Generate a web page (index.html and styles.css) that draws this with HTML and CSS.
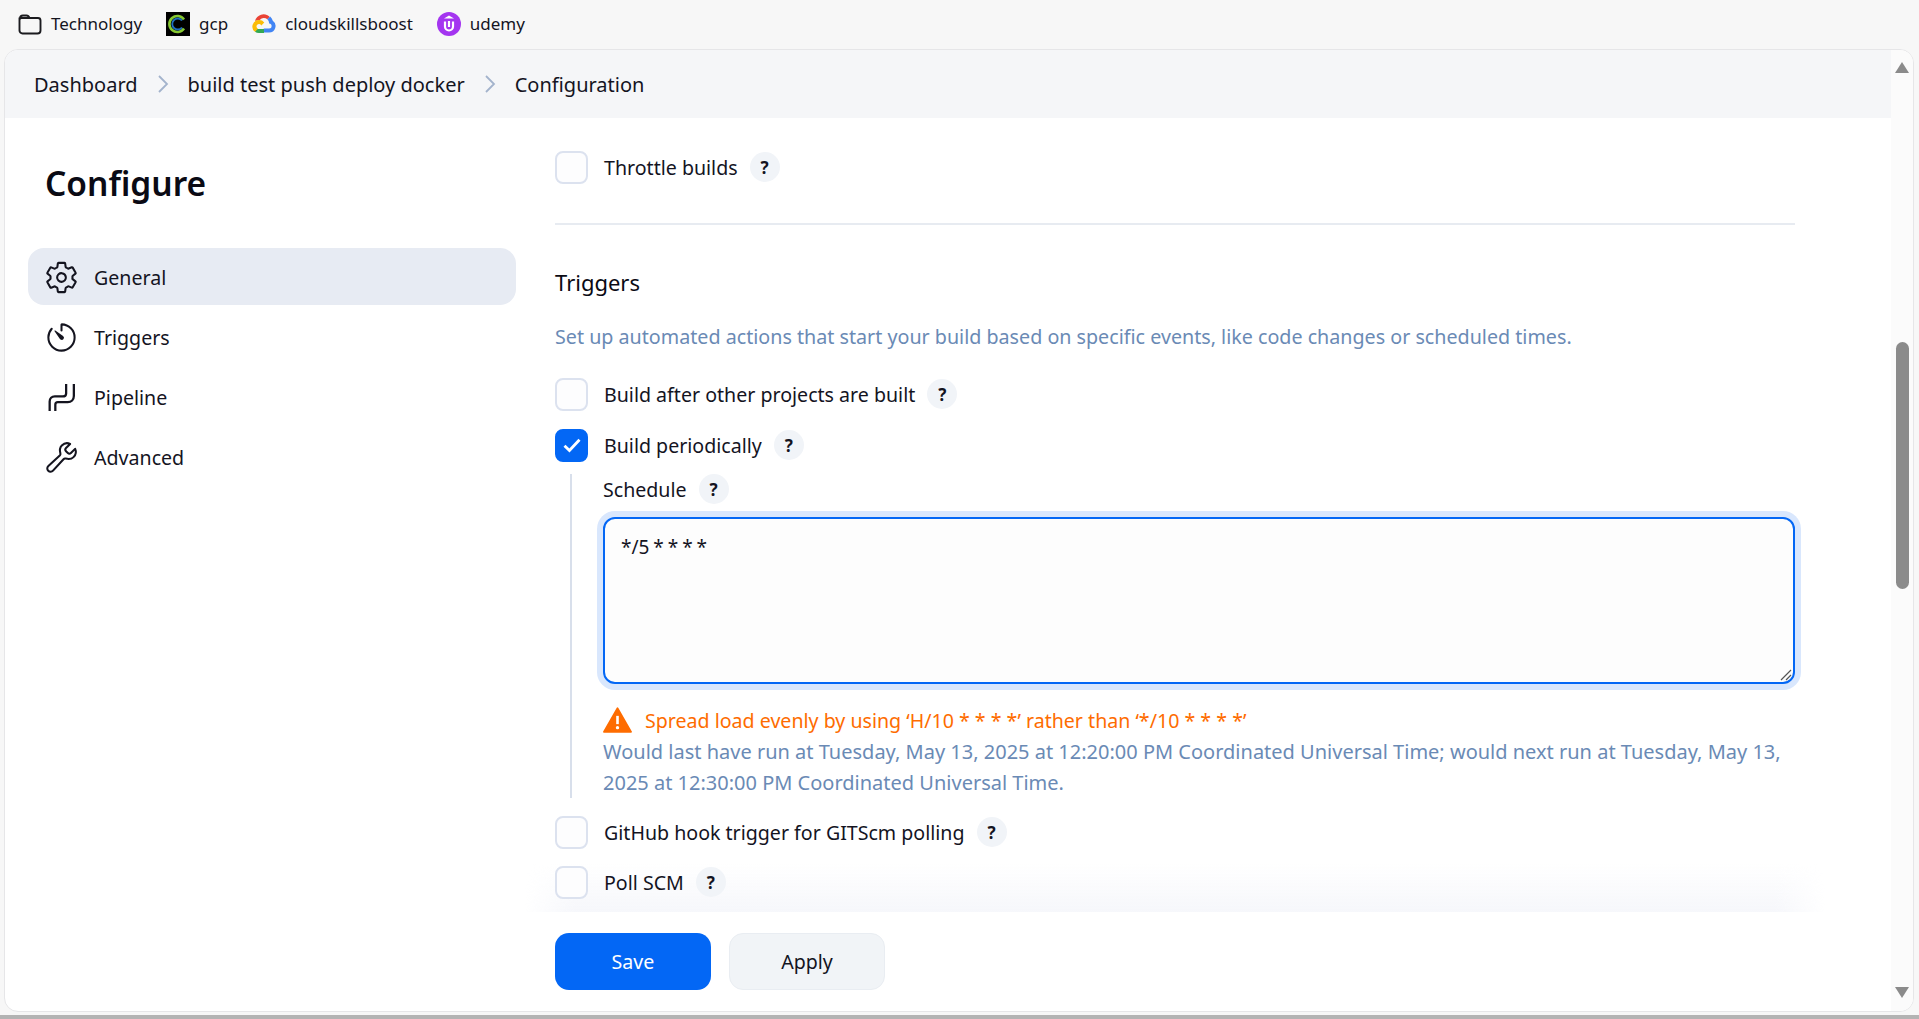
FILE: index.html
```html
<!DOCTYPE html>
<html lang="en">
<head>
    <meta charset="UTF-8">
    <title>Configuration</title>
    <link rel="stylesheet" href="styles.css">
</head>
<body>
    <div class="bookmarks">
        <a class="mark">
            <svg class="fav" viewBox="0 0 24 24"><path d="M2 6.500a3 3 0 0 1 3-3h3.500c1.600 0 2.400.9 3 2.500H20a2.500 2.500 0 0 1 2.500 2.500v10a3 3 0 0 1-3 3H4.500a3 3 0 0 1-3-3V6.500z M1.500 7.500c0-1 1-1.500 2-1.500h7.500" fill="none" stroke="#1b1b1f" stroke-width="1.900"/></svg>
            Technology
        </a>
        <a class="mark">
            <svg class="fav" viewBox="0 0 24 24"><rect width="24" height="24" fill="#000"/><path d="M18 16.500A8 8 0 1 1 18 7.500" fill="none" stroke="#86c832" stroke-width="2.600"/><path d="M16 15.500A5.500 5.500 0 1 1 16 8.500" fill="none" stroke="#1f6fc0" stroke-width="1.800"/></svg>
            gcp
        </a>
        <a class="mark">
            <svg class="fav" viewBox="0 0 24 24">
                <path d="M15.300 7.300l2-2 .1-.9A9 9 0 0 0 3 8.800l.7-.1 4-.7.3-.3a5 5 0 0 1 7.300-.4z" fill="#ea4335"/>
                <path d="M20.800 8.800a9 9 0 0 0-2.700-4.400l-2.800 2.800a5 5 0 0 1 1.800 3.900v.5a2.500 2.500 0 1 1 0 5H12l-.5.500v3l.5.500h5.100a6.500 6.500 0 0 0 3.700-11.800z" fill="#4285f4"/>
                <path d="M6.900 21.100H12v-4H6.900a2.500 2.500 0 0 1-1-.2l-.7.2-2 2-.2.7a6.500 6.500 0 0 0 3.900 1.300z" fill="#34a853"/>
                <path d="M6.900 8.100A6.500 6.500 0 0 0 3 19.800l3-3a2.500 2.500 0 1 1 3.300-3.300l3-3a6.500 6.500 0 0 0-5.400-2.400z" fill="#fbbc05"/>
            </svg>
            cloudskillsboost
        </a>
        <a class="mark">
            <svg class="fav" viewBox="0 0 24 24"><circle cx="12" cy="12" r="12" fill="#a435f0"/><path d="M12 3.500l5 3H7z" fill="#fff"/><path d="M8 9.500v5a4 4 0 0 0 8 0v-5" fill="none" stroke="#fff" stroke-width="2.200"/><path d="M12 9v6" stroke="#fff" stroke-width="2.200"/></svg>
            udemy
        </a>
    </div>

    <div class="frame">
        <div class="page">
            <div class="crumbs">
                <span>Dashboard</span>
                <svg class="chev" viewBox="0 0 12 20"><path d="M2 2l8 8-8 8" fill="none" stroke="#a3b3cc" stroke-width="1.800"/></svg>
                <span>build test push deploy docker</span>
                <svg class="chev" viewBox="0 0 12 20"><path d="M2 2l8 8-8 8" fill="none" stroke="#a3b3cc" stroke-width="1.800"/></svg>
                <span>Configuration</span>
            </div>
            <div class="content">
                <div class="sidebar">
                    <h1>Configure</h1>
                    <div class="nav-item active">
                        <svg class="nav-icon" viewBox="0 0 512 512"><path d="M262.290 192.310a64 64 0 1 0 57.400 57.400 64.130 64.130 0 0 0-57.400-57.400zM416.390 256a154.340 154.340 0 0 1-1.530 20.790l45.210 35.460a10.810 10.810 0 0 1 2.450 13.750l-42.770 74a10.810 10.810 0 0 1-13.140 4.590l-44.900-18.080a16.110 16.110 0 0 0-15.170 1.750A164.480 164.480 0 0 1 325 400.800a15.940 15.940 0 0 0-8.820 12.140l-6.730 47.890a11.080 11.080 0 0 1-10.680 9.170h-85.540a11.110 11.110 0 0 1-10.690-8.870l-6.720-47.820a16.070 16.070 0 0 0-9-12.220 155.300 155.300 0 0 1-21.460-12.570 16 16 0 0 0-15.110-1.710l-44.890 18.070a10.810 10.810 0 0 1-13.140-4.580l-42.770-74a10.800 10.800 0 0 1 2.450-13.750l38.210-30a16.050 16.050 0 0 0 6-14.080c-.36-4.170-.58-8.330-.58-12.500s.21-8.270.58-12.350a16 16 0 0 0-6.070-13.940l-38.190-30A10.810 10.810 0 0 1 49.480 186l42.770-74a10.810 10.810 0 0 1 13.140-4.590l44.900 18.080a16.110 16.110 0 0 0 15.170-1.750A164.480 164.480 0 0 1 187 111.200a15.940 15.940 0 0 0 8.820-12.140l6.730-47.890A11.080 11.080 0 0 1 213.230 42h85.540a11.110 11.110 0 0 1 10.690 8.870l6.720 47.820a16.070 16.070 0 0 0 9 12.220 155.300 155.300 0 0 1 21.460 12.570 16 16 0 0 0 15.110 1.710l44.890-18.070a10.810 10.810 0 0 1 13.140 4.580l42.770 74a10.800 10.800 0 0 1-2.450 13.750l-38.210 30a16.050 16.050 0 0 0-6.050 14.080c.33 4.140.55 8.300.55 12.470z"/></svg>
                        General
                    </div>
                    <div class="nav-item">
                        <svg class="nav-icon" viewBox="0 0 512 512"><path d="M112.910 128A191.850 191.850 0 0 0 64 254c-1.180 106.350 85.650 193.800 192 194 106.200.2 192-85.830 192-192 0-104.540-83.550-189.610-187.580-192a4.360 4.360 0 0 0-4.420 4.370V152"/><path class="solid" d="M233.380 278.630l-79-113a8.130 8.130 0 0 1 11.320-11.320l113 79a32.500 32.500 0 0 1-37 53.340 33.210 33.210 0 0 1-9.320-8.020z"/></svg>
                        Triggers
                    </div>
                    <div class="nav-item">
                        <svg class="nav-icon" viewBox="-3 -3 34 34"><path class="thin" d="M2.500 27v-9c0-3 2-5 5-5h7.500c2.500 0 3.500-1.500 3.500-3V1"/><path class="thin" d="M8 27v-6c0-1.500 1-2.500 2.500-2.500H20c3.500 0 6-2.500 6-6V1"/></svg>
                        Pipeline
                    </div>
                    <div class="nav-item">
                        <svg class="nav-icon" viewBox="0 0 512 512"><path d="M393.870 190a32.100 32.100 0 0 1-45.250 0l-26.570-26.570a32.090 32.090 0 0 1 0-45.260L382.190 58a1 1 0 0 0-.3-1.640c-38.820-16.640-89.150-8.160-121.110 23.570-30.580 30.350-32.320 76-21.120 115.840a31.930 31.930 0 0 1-9.060 32.080L64 380a48.170 48.170 0 1 0 68 68l153.240-167a31.930 31.930 0 0 1 31.530-9.270c39.630 10.500 84.850 8.820 115.120-21.120 32.560-32.060 40.080-84.830 24.170-120.700a1 1 0 0 0-1.640-.3z"/></svg>
                        Advanced
                    </div>
                </div>

                <div class="main">
                    <div class="check-row first">
                        <span class="box"></span>
                        <span>Throttle builds</span>
                        <span class="help">?</span>
                    </div>
                    <hr class="rule">
                    <h2>Triggers</h2>
                    <p class="desc">Set up automated actions that start your build based on specific events, like code changes or scheduled times.</p>
                    <div class="check-row">
                        <span class="box"></span>
                        <span>Build after other projects are built</span>
                        <span class="help">?</span>
                    </div>
                    <div class="check-row">
                        <span class="box on">
                            <svg viewBox="0 0 16 16"><path d="M3 8.500l3.300 3.200L13 4.500" fill="none" stroke="#fff" stroke-width="1.900"/></svg>
                        </span>
                        <span>Build periodically</span>
                        <span class="help">?</span>
                    </div>
                    <div class="nested">
                        <div class="field-label">
                            <span>Schedule</span>
                            <span class="help">?</span>
                        </div>
                        <div class="cron">*/5 * * * *
                            <svg class="grip" viewBox="0 0 12 12"><path d="M1 11L11 1M6 11l5-5" stroke="#555" stroke-width="1.200"/></svg>
                        </div>
                        <div class="warn">
                            <svg viewBox="0 0 24 22"><path d="M12 1L23.500 21H.5z" fill="#fe6c00" stroke="#fe6c00" stroke-width="1.500" stroke-linejoin="round"/><path d="M12 7.500v7" stroke="#fff" stroke-width="2.200"/><circle cx="12" cy="17.500" r="1.400" fill="#fff"/></svg>
                            Spread load evenly by using ‘H/10 * * * *’ rather than ‘*/10 * * * *’
                        </div>
                        <p class="next-run">Would last have run at Tuesday, May 13, 2025 at 12:20:00 PM Coordinated Universal Time; would next run at Tuesday, May 13, 2025 at 12:30:00 PM Coordinated Universal Time.</p>
                    </div>
                    <div class="check-row">
                        <span class="box"></span>
                        <span>GitHub hook trigger for GITScm polling</span>
                        <span class="help">?</span>
                    </div>
                    <div class="check-row last">
                        <span class="box"></span>
                        <span>Poll SCM</span>
                        <span class="help">?</span>
                    </div>
                    <div class="bottom-bar">
                        <button class="btn save">Save</button>
                        <button class="btn apply">Apply</button>
                    </div>
                </div>
            </div>
        </div>
        <div class="scrollbar">
            <span class="arrow up"></span>
            <span class="thumb"></span>
            <span class="arrow down"></span>
        </div>
    </div>
</body>
</html>
```

FILE: styles.css
```css
* {
    box-sizing: border-box;
}
html, body {
    margin: 0;
    height: 100%;
}
body {
    display: flex;
    flex-direction: column;
    overflow: hidden;
    background-color: #f7f7f7;
    border-bottom: 4px solid #b3b3b3;
    font-family: "Noto Sans", "Open Sans", sans-serif;
    font-size: 19.600px;
    color: #14141f;
}

/* bookmarks bar */
.bookmarks {
    display: flex;
    align-items: center;
    gap: 24px;
    height: 49px;
    flex: none;
    padding: 0 0 2px 18px;
    font-size: 17px;
}
.mark {
    display: flex;
    align-items: center;
    gap: 9px;
}
.fav {
    width: 24px;
    height: 24px;
}

/* window */
.frame {
    flex: 1;
    display: flex;
    margin: 0 5px 3px 4px;
    min-height: 0;
    background: #fff;
    border: 1px solid #e6e6e8;
    border-radius: 14px;
    overflow: hidden;
}
.page {
    flex: 1;
    display: flex;
    flex-direction: column;
    min-width: 0;
}
.crumbs {
    flex: none;
    display: flex;
    align-items: center;
    gap: 19px;
    height: 68px;
    padding-left: 29px;
    background: #f5f6f8;
    font-size: 20px;
}
.chev {
    width: 12px;
    height: 20px;
}
.content {
    flex: 1;
    display: flex;
    min-height: 0;
}

/* sidebar */
.sidebar {
    flex: none;
    width: 550px;
    padding: 38px 34px 0 23px;
}
.sidebar h1 {
    margin: 0 0 38px 17px;
    font-size: 33.500px;
    line-height: 54px;
    font-weight: 600;
    color: #0a0a14;
}
.nav-item {
    display: flex;
    align-items: center;
    gap: 15px;
    height: 57px;
    margin-bottom: 3px;
    margin-right: 5px;
    padding: 2px 0 0 16px;
    border-radius: 16px;
}
.nav-item.active {
    background: #e7ebf3;
}
.nav-icon {
    width: 35px;
    height: 35px;
    fill: none;
    stroke: #14141f;
    stroke-width: 30;
    stroke-linecap: round;
    stroke-linejoin: round;
}
.nav-icon .solid {
    fill: #14141f;
    stroke: none;
}
.nav-icon .thin {
    stroke-width: 2.200;
    stroke-linecap: butt;
}

/* main column */
.main {
    flex: 1;
    display: flex;
    flex-direction: column;
    min-width: 0;
    padding-right: 96px;
}
.check-row {
    position: relative;
    z-index: 1;
    flex: none;
    display: flex;
    align-items: center;
    gap: 16px;
    height: 34px;
    margin-bottom: 17px;
}
.check-row.first {
    margin-top: 32px;
    margin-bottom: 0;
}
.check-row.last {
    margin-top: -1px;
    margin-bottom: 0;
}
.box {
    flex: none;
    display: flex;
    align-items: center;
    justify-content: center;
    width: 33px;
    height: 33px;
    background: #fdfdfe;
    border: 2.500px solid #dce2ef;
    border-radius: 8px;
}
.box.on {
    background: #0367f5;
    border-color: #0367f5;
}
.box svg {
    flex: none;
    width: 24px;
    height: 24px;
}
.help {
    flex: none;
    display: flex;
    align-items: center;
    justify-content: center;
    width: 30px;
    height: 30px;
    margin-left: -4px;
    border-radius: 50%;
    background: #f1f4f8;
    font-size: 17px;
    font-weight: 700;
}
.rule {
    flex: none;
    width: 100%;
    height: 2px;
    margin: 39px 0 0;
    border: 0;
    background: #e7ebf1;
}
h2 {
    flex: none;
    margin: 42px 0 0;
    font-size: 22px;
    line-height: 30px;
    font-weight: 400;
    color: #0a0a14;
}
.desc {
    flex: none;
    margin: 25px 0 25px;
    font-size: 19.700px;
    line-height: 30px;
    color: #6a8ab5;
}

/* nested schedule block */
.nested {
    flex: none;
    margin: -5px 0 17px 15px;
    padding-left: 31px;
    border-left: 2px solid #d8dfeb;
}
.field-label {
    display: flex;
    align-items: center;
    gap: 16px;
    height: 30px;
}
.cron {
    position: relative;
    height: 167px;
    margin-top: 13px;
    padding: 15px 16px;
    background: #fdfdfd;
    border: 2px solid #0367f5;
    border-radius: 12px;
    box-shadow: 0 0 0 6px #d9e7fd;
    font-size: 19px;
    word-spacing: -1px;
}
.grip {
    position: absolute;
    right: 1px;
    bottom: 1px;
    width: 12px;
    height: 12px;
}
.warn {
    display: flex;
    align-items: center;
    gap: 13px;
    height: 30px;
    margin-top: 21px;
    color: #fe6c00;
}
.warn svg {
    flex: none;
    width: 29px;
    height: 26px;
}
.next-run {
    margin: 0;
    padding-top: 1px;
    font-size: 20px;
    line-height: 31px;
    color: #6a8ab5;
}

/* save / apply */
.bottom-bar {
    position: relative;
    flex: none;
    display: flex;
    gap: 18px;
    margin-top: auto;
    padding: 21px 0 21px;
    background: #fff;
}
.bottom-bar::before {
    content: "";
    position: absolute;
    left: -30px;
    right: -30px;
    bottom: 100%;
    height: 48px;
    background: linear-gradient(to bottom, rgba(245, 246, 250, 0), #f6f7fb);
    -webkit-mask-image: linear-gradient(to right, transparent, #000 50px, #000 calc(100% - 50px), transparent);
    mask-image: linear-gradient(to right, transparent, #000 50px, #000 calc(100% - 50px), transparent);
    pointer-events: none;
}
.btn {
    width: 156px;
    height: 57px;
    border-radius: 14px;
    font: inherit;
}
.save {
    border: 0;
    background: #0367f5;
    color: #fff;
}
.apply {
    border: 1px solid #e9edf2;
    background: #f1f4f7;
    color: #14141f;
}

/* scrollbar */
.scrollbar {
    flex: none;
    display: flex;
    flex-direction: column;
    align-items: center;
    width: 22px;
    padding: 12px 0 13px;
    background: #fbfbfb;
}
.arrow {
    flex: none;
    width: 0;
    height: 0;
    border-left: 7.500px solid transparent;
    border-right: 7.500px solid transparent;
}
.arrow.up {
    border-bottom: 11px solid #8b8b8b;
}
.arrow.down {
    margin-top: auto;
    border-top: 11px solid #8b8b8b;
}
.thumb {
    flex: none;
    width: 13px;
    height: 247px;
    margin-top: 269px;
    border-radius: 7px;
    background: #8b8b8b;
}
```
